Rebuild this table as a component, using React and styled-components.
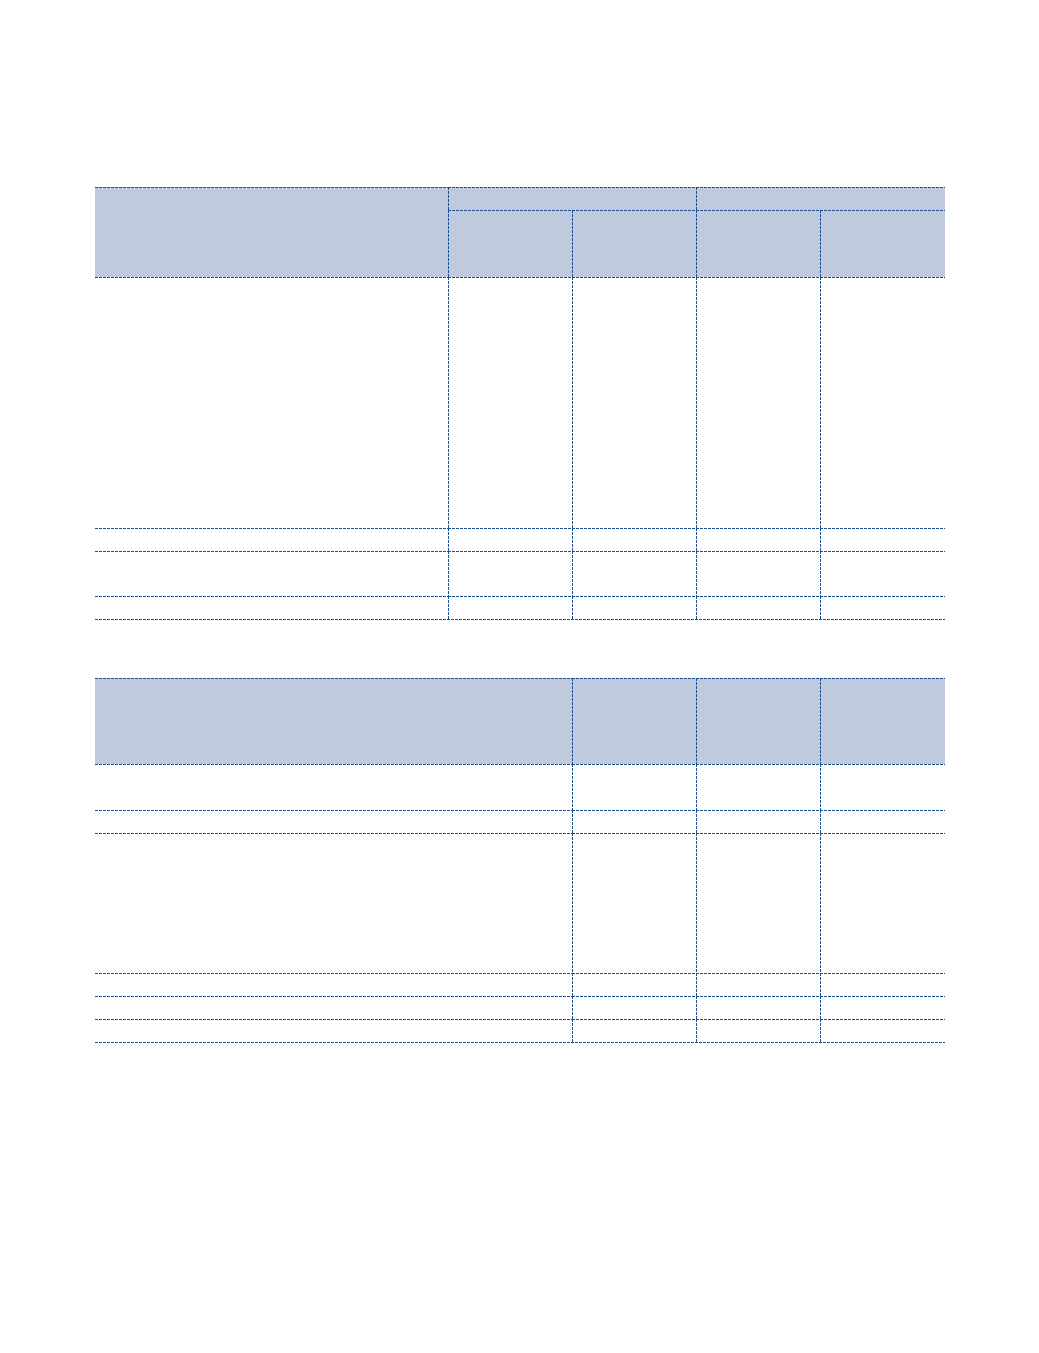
import React from "react";
import styled, { createGlobalStyle } from "styled-components";

const LINE = "#1c4f8c";
const FILL = "#bfcadf";

const Global = createGlobalStyle`
  html, body { margin: 0; padding: 0; background: #ffffff; }
  body { font-family: "Liberation Sans", Arial, sans-serif; }
`;

const Page = styled.div`
  width: 1039px;
  min-height: 1353px;
  box-sizing: border-box;
  padding: 187px 95px 0 95px;
  display: flex;
  flex-direction: column;
  gap: 58px;
`;

const Grid = styled.div`
  display: grid;
  width: 850px;
  grid-template-columns: ${(p) => p.$cols};
  grid-template-rows: ${(p) => p.$rows};
`;

const hLine = `linear-gradient(to right, ${LINE} 3px, transparent 3px)`;
const vLine = `linear-gradient(to bottom, ${LINE} 3px, transparent 3px)`;

const Cell = styled.div`
  grid-column: ${(p) => p.$col || "auto"};
  grid-row: ${(p) => p.$row || "auto"};
  background-color: ${(p) => (p.$fill ? FILL : "transparent")};
  background-image: ${(p) =>
    [p.$top ? hLine : null, p.$left ? vLine : null].filter(Boolean).join(", ") || "none"};
  background-size: ${(p) =>
    [p.$top ? "4px 1px" : null, p.$left ? "1px 4px" : null].filter(Boolean).join(", ") || "auto"};
  background-position: 0 0;
  background-repeat: ${(p) =>
    [p.$top ? "repeat-x" : null, p.$left ? "repeat-y" : null].filter(Boolean).join(", ") || "no-repeat"};
`;

const BottomRule = styled.div`
  grid-column: 1 / -1;
  height: 1px;
  background-image: ${hLine};
  background-size: 4px 1px;
  background-repeat: repeat-x;
`;

function BodyRow({ cols }) {
  return (
    <>
      <Cell $top />
      {Array.from({ length: cols }).map((_, i) => (
        <Cell key={i} $top $left />
      ))}
    </>
  );
}

export default function App() {
  return (
    <>
      <Global />
      <Page>
        <Grid $cols="353px 124px 124px 124px 125px" $rows="23px 67px 251px 23px 45px 23px 1px">
          <Cell $col="1" $row="1 / 3" $fill $top />
          <Cell $col="2 / 4" $row="1" $fill $top $left />
          <Cell $col="4 / 6" $row="1" $fill $top $left />
          <Cell $col="2" $row="2" $fill $top $left />
          <Cell $col="3" $row="2" $fill $top $left />
          <Cell $col="4" $row="2" $fill $top $left />
          <Cell $col="5" $row="2" $fill $top $left />
          <BodyRow cols={4} />
          <BodyRow cols={4} />
          <BodyRow cols={4} />
          <BodyRow cols={4} />
          <BottomRule />
        </Grid>
        <Grid $cols="477px 124px 124px 125px" $rows="86px 46px 23px 140px 23px 23px 23px 1px">
          <Cell $fill $top />
          <Cell $fill $top $left />
          <Cell $fill $top $left />
          <Cell $fill $top $left />
          <BodyRow cols={3} />
          <BodyRow cols={3} />
          <BodyRow cols={3} />
          <BodyRow cols={3} />
          <BodyRow cols={3} />
          <BodyRow cols={3} />
          <BottomRule />
        </Grid>
      </Page>
    </>
  );
}
